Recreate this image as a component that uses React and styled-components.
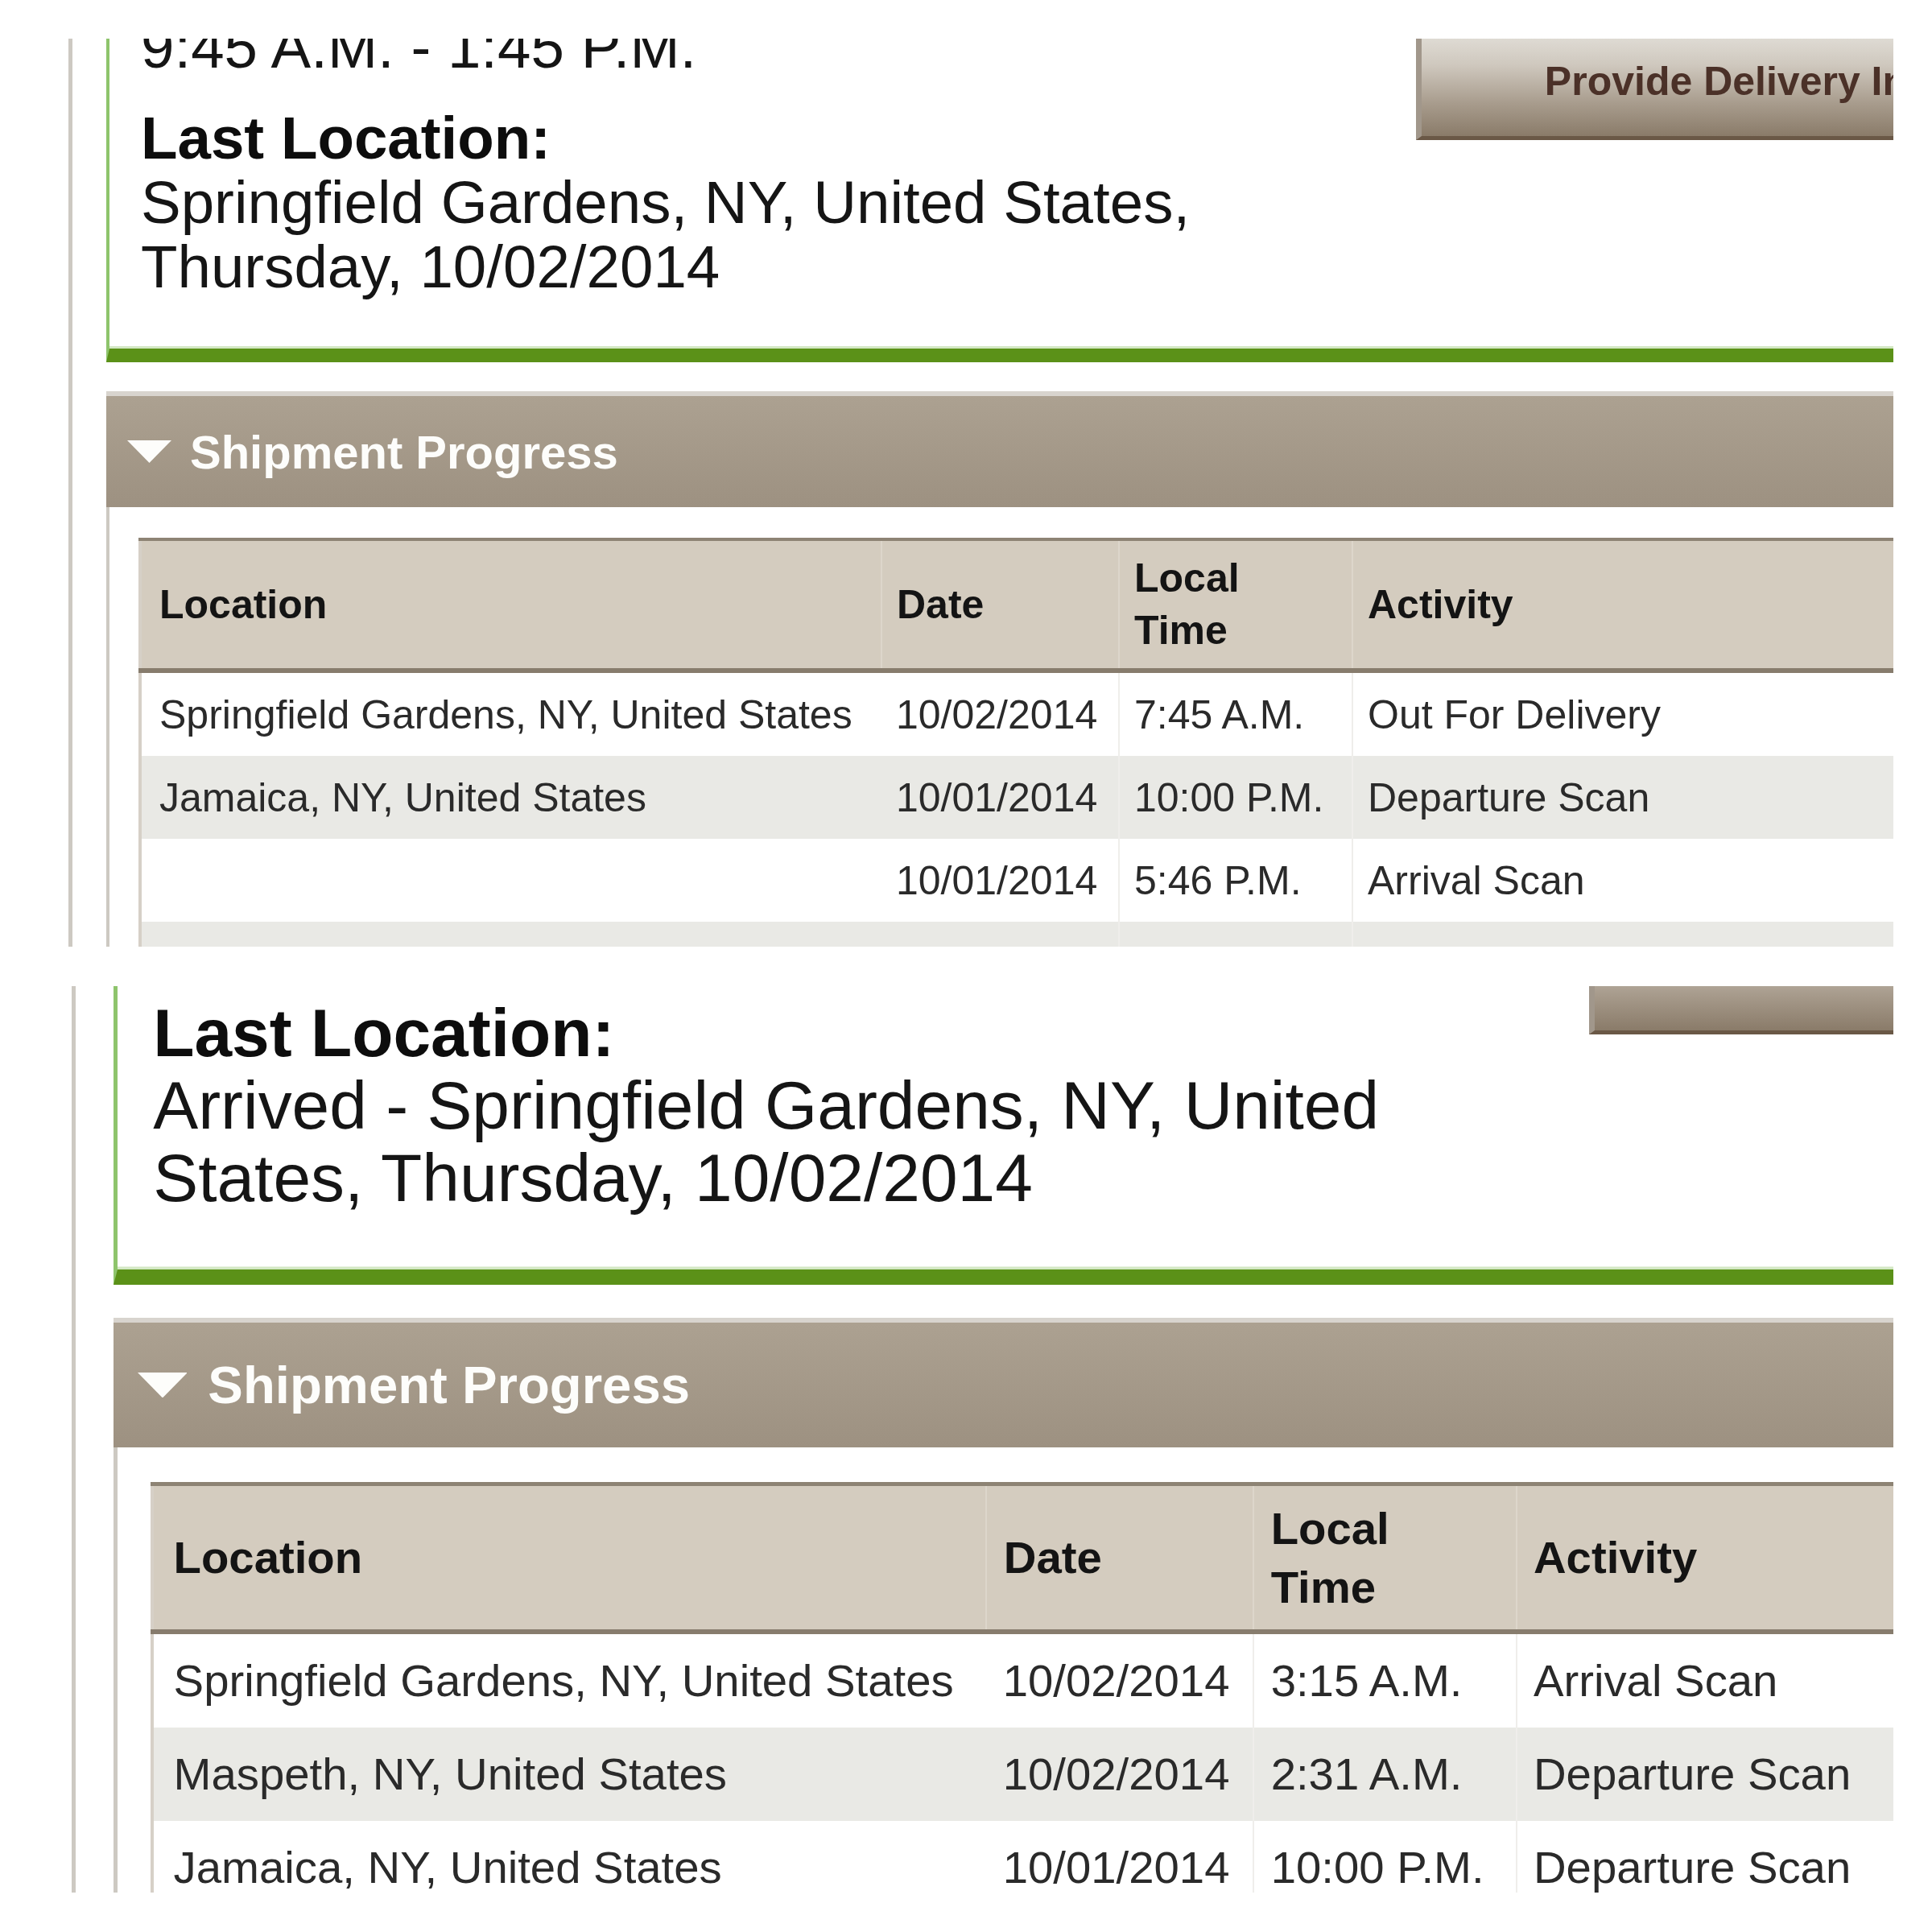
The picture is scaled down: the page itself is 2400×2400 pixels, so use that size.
import React from 'react';
import styled, { createGlobalStyle } from 'styled-components';

const GlobalStyle = createGlobalStyle`
  html, body {
    margin: 0;
    padding: 0;
    background: #fff;
  }
  body {
    font-family: "Liberation Sans", Arial, Helvetica, sans-serif;
  }
`;

const Sheet = styled.div`
  display: flex;
  flex-direction: column;
  gap: 49px;
  width: 2400px;
  height: 2400px;
  padding-top: 48px;
  box-sizing: border-box;
  background: #fff;
`;

// one cropped screenshot; every size inside is in em of $base
const Shot = styled.div`
  width: 2352px;
  height: ${({ $height }) => $height}px;
  padding-left: ${({ $indent }) => $indent}px;
  box-sizing: border-box;
  overflow: hidden;
  font-size: ${({ $base }) => $base}px;
`;

const Page = styled.div`
  width: 50em;
  margin-top: ${({ $lift }) => $lift}px;
  padding: 0 0 4em 0.84em;
  border-left: 0.1em solid #cdc9c2;
`;

const Summary = styled.div`
  display: flex;
  align-items: flex-start;
  padding: 0 0 1.22em 0.78em;
  border-left: 0.09em solid #8ec46c;
  border-bottom: 0.34em solid #5b9118;
  box-shadow: inset 0 -0.06em 0 #d3e8c4;
`;

const Details = styled.div`
  flex: 0 0 21.26em;
  font-size: 1.49em;
  line-height: 1.075;
  color: #151515;
`;

const Hours = styled.div``;

const Label = styled.div`
  margin-top: 0.44em;
  font-weight: bold;
  color: #0d0d0d;
`;

const Place = styled.div`
  max-width: 20em;
`;

const ActionButton = styled.div`
  flex: none;
  display: flex;
  align-items: center;
  height: 2.72em;
  margin-top: 0.28em;
  padding: 0 3.06em;
  border-left: 0.14em solid #a1978b;
  border-bottom: 0.1em solid #6a5846;
  background: linear-gradient(#e5e3dd 0%, #cfc8be 35%, #a89c8d 70%, #8a7b69 100%);
  color: #4b3128;
  font-weight: bold;
  white-space: nowrap;
`;

const Section = styled.div`
  margin-top: 0.72em;
`;

const SectionHead = styled.div`
  display: flex;
  align-items: center;
  gap: 0.46em;
  height: 2.76em;
  padding-left: 0.52em;
  border-top: 0.12em solid #d8d4ce;
  background: linear-gradient(#aca191, #9d9181);
`;

const Caret = styled.svg`
  width: 1.1em;
  height: 0.56em;
  flex: none;
`;

const SectionTitle = styled.span`
  font-size: 1.16em;
  font-weight: bold;
  color: #fdfdfb;
  white-space: nowrap;
`;

const SectionBody = styled.div`
  padding: 0.76em 0 0 0.72em;
  border-left: 0.09em solid #cdc9c2;
`;

const Table = styled.table`
  width: 44em;
  table-layout: fixed;
  border-collapse: collapse;
  border-top: 0.09em solid #8d8374;
  border-left: 0.08em solid #d6d0c7;
`;

const Th = styled.th`
  width: ${({ $w }) => $w}em;
  height: 3.16em;
  padding: 0 0.36em;
  border-left: 0.04em solid #ddd6cb;
  border-bottom: 0.12em solid #877c6d;
  background: #d4ccbf;
  color: #141414;
  font-weight: bold;
  text-align: left;
  line-height: 1.3;
  &:first-child {
    border-left: none;
    padding-left: 0.44em;
  }
`;

const Tr = styled.tr`
  background: ${({ $shade }) => ($shade ? '#e9e9e5' : '#fff')};
`;

const Td = styled.td`
  height: 2.06em;
  padding: 0 0.36em;
  border-left: 0.04em solid #efeeeb;
  color: #2a2a2a;
  white-space: nowrap;
  overflow: hidden;
  &:first-child {
    border-left: none;
    padding-left: 0.44em;
  }
  &:nth-child(2) {
    border-left: none;
  }
`;

const shots = [
  {
    base: 50,
    height: 1128,
    indent: 85,
    lift: -29,
    hours: '9:45 A.M. - 1:45 P.M.',
    place: 'Springfield Gardens, NY, United States, Thursday, 10/02/2014',
    rows: [
      ['Springfield Gardens, NY, United States', '10/02/2014', '7:45 A.M.', 'Out For Delivery'],
      ['Jamaica, NY, United States', '10/01/2014', '10:00 P.M.', 'Departure Scan'],
      ['', '10/01/2014', '5:46 P.M.', 'Arrival Scan'],
      ['Louisville, KY, United States', '10/01/2014', '1:16 P.M.', 'Departure Scan'],
    ],
  },
  {
    base: 56.3,
    height: 1126,
    indent: 89,
    lift: -114,
    hours: '9:45 A.M. - 1:45 P.M.',
    place: 'Arrived - Springfield Gardens, NY, United States, Thursday, 10/02/2014',
    rows: [
      ['Springfield Gardens, NY, United States', '10/02/2014', '3:15 A.M.', 'Arrival Scan'],
      ['Maspeth, NY, United States', '10/02/2014', '2:31 A.M.', 'Departure Scan'],
      ['Jamaica, NY, United States', '10/01/2014', '10:00 P.M.', 'Departure Scan'],
      ['', '10/01/2014', '5:46 P.M.', 'Arrival Scan'],
    ],
  },
];

const TrackingShot = ({ shot }) => (
  <Shot $base={shot.base} $height={shot.height} $indent={shot.indent}>
    <Page $lift={shot.lift}>
      <Summary>
        <Details>
          <Hours>{shot.hours}</Hours>
          <Label>Last Location:</Label>
          <Place>{shot.place}</Place>
        </Details>
        <ActionButton>Provide Delivery Instructions</ActionButton>
      </Summary>

      <Section>
        <SectionHead>
          <Caret viewBox="0 0 55 28">
            <polygon points="0,0 55,0 27.5,28" fill="#fdfdfb" />
          </Caret>
          <SectionTitle>Shipment Progress</SectionTitle>
        </SectionHead>
        <SectionBody>
          <Table>
            <thead>
              <tr>
                <Th $w={17.56}>Location</Th>
                <Th $w={5.14}>Date</Th>
                <Th $w={5.04}>Local<br />Time</Th>
                <Th $w={13.28}>Activity</Th>
              </tr>
            </thead>
            <tbody>
              {shot.rows.map((row, i) => (
                <Tr key={i} $shade={i % 2 === 1}>
                  {row.map((cell, j) => (
                    <Td key={j}>{cell}</Td>
                  ))}
                </Tr>
              ))}
            </tbody>
          </Table>
        </SectionBody>
      </Section>
    </Page>
  </Shot>
);

export default function App() {
  return (
    <>
      <GlobalStyle />
      <Sheet>
        {shots.map((shot, i) => (
          <TrackingShot key={i} shot={shot} />
        ))}
      </Sheet>
    </>
  );
}
